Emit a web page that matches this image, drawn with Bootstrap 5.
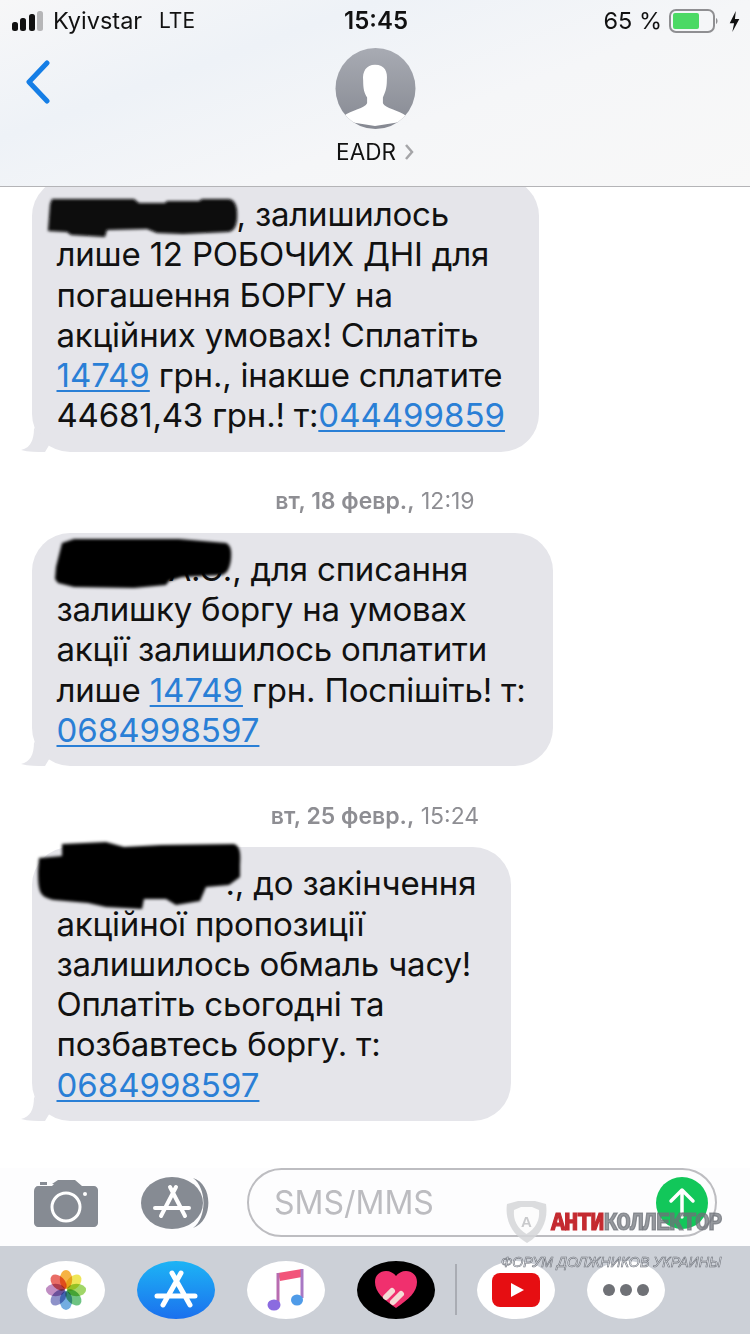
<!DOCTYPE html>
<html lang="uk">
  <head>
    <meta charset="UTF-8" />
    <meta name="viewport" content="width=device-width, initial-scale=1.0" />
    <title>EADR</title>
    <link href="https://cdn.jsdelivr.net/npm/bootstrap@5.3.0/dist/css/bootstrap.min.css" rel="stylesheet" />
    <style>
      html, body { margin: 0; background: #fff; }
      body { font-family: Inter, "Liberation Sans", sans-serif; color: #111; }
      .phone { width: 750px; height: 1334px; overflow: hidden; }
      .top-head {
        height: 187px; flex: none; border-bottom: 1px solid #b4b4b7;
        background: linear-gradient(160deg, #f7f7f8 0%, #eef2f7 30%, #f5f6f8 60%, #f8f8f8 100%);
      }
      .status-row { height: 42px; padding: 0 10px 0 12px; font-size: 23.5px; line-height: 42px; }
      .sig { gap: 2.4px; width: 31px; margin-right: 10px; height: 20px; }
      .sig i { display: block; width: 6px; background: #111; border-radius: 2.5px; }
      .sig i:nth-child(1) { height: 9px; }
      .sig i:nth-child(2) { height: 13px; }
      .sig i:nth-child(3) { height: 17px; }
      .sig i:nth-child(4) { height: 20px; background: #b6b6b8; }
      .carrier { width: 106px; }
      .net-type { font-size: 21px; }
      .clock { position: absolute; left: 344px; font-weight: 600; font-size: 24px; }
      .batt { margin: 0 11px 0 7px; }
      .nav-row { height: 144px; }
      .nav-side { width: 200px; padding: 18px 0 0 25px; flex: none; }
      .contact-name { font-size: 22.5px; line-height: 26px; margin-top: 10px; }
      .chat-area { flex: 1 1 auto; overflow: hidden; padding: 0 0 0 32px; min-height: 0; }
      .bubble {
        position: relative; background: #e5e5ea; border-radius: 38px; padding: 16px 0 16px 24.5px;
        font-size: 33px; line-height: 40.3px; color: #111; letter-spacing: -0.2px; white-space: nowrap;
      }
      .bubble a { color: #2a7fd6; letter-spacing: 0; text-decoration: underline; text-decoration-thickness: 2px; text-underline-offset: 3px; }
      .bw-one { width: 507px; margin-top: -9px; }
      .bw-two { width: 521px; }
      .bw-three { width: 479px; }
      .tail { position: absolute; left: -11px; bottom: 0; }
      .blob { position: absolute; pointer-events: none; overflow: visible; }
      .hidden-name { display: inline-block; }
      .stamp {
        height: 28px; line-height: 28px; margin: 35.5px 0 17.5px -32px; text-align: center;
        font-size: 23px; color: #8e8e93; font-weight: 400;
      }
      .stamp b { font-weight: 600; }
      .compose { height: 78px; flex: none; padding: 0 33px 9px 34px; background: #fdfdfe; }
      .round-app { margin: 0 0 0 43px; }
      .sms-box {
        width: 470px; height: 69px; margin-left: 36px; border: 2px solid #bdbdc1; border-radius: 35px;
        padding: 0 7px 0 25px; font-size: 32px; color: #bcbcc0;
      }
      .send { width: 52px; height: 52px; }
      .dock { height: 88px; flex: none; background: #ccd0d7; padding: 15px 0 0 27px; gap: 32px; }
      .dock-item { width: 78px; height: 58px; border-radius: 50%; background: #fff; flex: none; }
      .dock-item.is-blue { background: linear-gradient(#1db4f5, #1b70ee); }
      .dock-item.is-black { background: #000; }
      .dock-line { width: 2px; height: 51px; background: #a9acb3; margin: 3px -12px 0 -12px; flex: none; }
      .petals ellipse { mix-blend-mode: multiply; }
      .wm-mark { position: absolute; left: 501px; top: 1200px; width: 225px; height: 70px; pointer-events: none; }
      .wm-shield { position: absolute; left: 3px; top: 0; }
      .wm-title {
        position: absolute; left: 50px; top: 12px; font: 700 25px/24px "Liberation Mono", monospace;
        letter-spacing: -1.2px; white-space: nowrap; transform: scaleX(0.95); transform-origin: left;
        -webkit-text-stroke: 1.2px currentColor;
      }
      .wm-red { color: #c42a30; }
      .wm-gray { color: rgba(110, 113, 120, .72); }
      .wm-sub {
        position: absolute; left: 0; top: 54px; font: italic 400 14.2px/16px "Liberation Sans", sans-serif;
        white-space: nowrap; color: rgba(235, 238, 242, .8); -webkit-text-stroke: .6px #6d7179;
      }
    </style>
  </head>
  <body>
    <div class="phone position-relative d-flex flex-column">
      <!-- top bar -->
      <div class="top-head">
        <div class="status-row d-flex align-items-center position-relative">
          <div class="sig d-flex align-items-end"><i></i><i></i><i></i><i></i></div>
          <span class="carrier">Kyivstar</span>
          <span class="net-type">LTE</span>
          <span class="clock">15:45</span>
          <span class="ms-auto">65 %</span>
          <svg class="batt" width="49" height="24" viewBox="0 0 49 24">
            <rect x="1" y="1" width="44" height="22" rx="6" fill="none" stroke="#8f8f92" stroke-width="2" />
            <rect x="4" y="4" width="26" height="16" rx="2" fill="#4cd964" />
            <path d="M47 9 C49 10 49 14 47 15 Z" fill="#8f8f92" />
          </svg>
          <svg width="11" height="21" viewBox="0 0 11 24"><path d="M7 0 L0 14 H5 L3 24 L11 9 H6 Z" fill="#111" /></svg>
        </div>
        <div class="nav-row d-flex">
          <div class="nav-side">
            <svg width="26" height="44" viewBox="0 0 26 44"><path d="M22 3 L4 22 L22 41" fill="none" stroke="#157ee6" stroke-width="5" stroke-linecap="round" stroke-linejoin="round" /></svg>
          </div>
          <div class="flex-grow-1 d-flex flex-column align-items-center">
            <svg style="margin-top: 6px" width="81" height="81" viewBox="0 0 81 82">
              <defs><linearGradient id="av" x1="0" y1="0" x2="0" y2="1"><stop offset="0" stop-color="#a8abb3" /><stop offset="1" stop-color="#868992" /></linearGradient><clipPath id="avc"><ellipse cx="40.5" cy="41" rx="40.5" ry="41" /></clipPath></defs>
              <ellipse cx="40.5" cy="41" rx="40.5" ry="41" fill="url(#av)" />
              <path clip-path="url(#avc)" d="M40 17 C50 17 53 24 52 33 C52 41 50 46 48 50 L48 56 C50 61 64 63 72 69 L72 74 L40 79 L8 74 L8 69 C16 63 30 61 32 56 L32 50 C29 46 28 41 28 33 C27 24 31 17 40 17 Z" fill="#fff" />
            </svg>
            <div class="contact-name d-flex align-items-center gap-2">EADR
              <svg width="10" height="18" viewBox="0 0 10 18"><path d="M2 2 L8 9 L2 16" fill="none" stroke="#a5a5a8" stroke-width="2.5" /></svg>
            </div>
          </div>
          <div class="nav-side"></div>
        </div>
      </div>

      <!-- messages -->
      <div class="chat-area">
        <div class="bubble bw-one">
          <span class="hidden-name" style="width: 180px"></span>, залишилось<br />
          лише 12 РОБОЧИХ ДНІ для<br />
          погашення БОРГУ на<br />
          акційних умовах! Сплатіть<br />
          <a href="#">14749</a> грн., інакше сплатите<br />
          44681,43 грн.! т:<a href="#">044499859</a>
          <svg class="tail" width="30" height="30" viewBox="0 0 30 30"><path d="M0 28 C9 26 13 19 13 6 L30 20 L24 30 C15 30 8 30 0 28 Z" fill="#e5e5ea" /></svg>
          <svg class="blob" style="left: 15px; top: 18px" width="192" height="44" viewBox="0 0 192 44">
            <defs><filter id="bl"><feGaussianBlur stdDeviation="1.6" /></filter></defs>
            <path filter="url(#bl)" d="M3 8 L5 3 H87 L92 7 H118 L120 5 H152 L155 3 H182 C189 4 191 12 190 24 C189 32 186 36 180 36 L136 38 L110 37 L100 33 L60 34 L58 41 L24 39 L20 36 L1 35 Z" fill="#070707" />
          </svg>
        </div>

        <div class="stamp"><b>вт, 18 февр.,</b> 12:19</div>

        <div class="bubble bw-two">
          <span class="hidden-name" style="width: 112px"></span>А.С., для списання<br />
          залишку боргу на умовах<br />
          акції залишилось оплатити<br />
          лише <a href="#">14749</a> грн. Поспішіть! т:<br />
          <a href="#">0684998597</a>
          <svg class="tail" width="30" height="30" viewBox="0 0 30 30"><path d="M0 28 C9 26 13 19 13 6 L30 20 L24 30 C15 30 8 30 0 28 Z" fill="#e5e5ea" /></svg>
          <svg class="blob" style="left: 22px; top: 4px" width="210" height="68" viewBox="0 0 210 68">
            <path filter="url(#bl)" d="M8 6 L20 2 H125 L172 6 C176 8 178 12 177 22 C176 30 174 36 168 38 L128 40 L115 44 L112 48 L80 51 L20 50 L4 46 L1 42 L2 30 Z" fill="#050505" />
          </svg>
        </div>

        <div class="stamp"><b>вт, 25 февр.,</b> 15:24</div>

        <div class="bubble bw-three">
          <span class="hidden-name" style="width: 169px"></span>., до закінчення<br />
          акційної пропозиції<br />
          залишилось обмаль часу!<br />
          Оплатіть сьогодні та<br />
          позбавтесь боргу. т:<br />
          <a href="#">0684998597</a>
          <svg class="tail" width="30" height="30" viewBox="0 0 30 30"><path d="M0 28 C9 26 13 19 13 6 L30 20 L24 30 C15 30 8 30 0 28 Z" fill="#e5e5ea" /></svg>
          <svg class="blob" style="left: 4px; top: -6px" width="210" height="76" viewBox="0 0 210 76">
            <path filter="url(#bl)" d="M26 3 L70 1 L88 6 L125 4 L198 3 C204 5 205 12 204 24 L204 36 L193 44 L170 46 L164 60 L140 64 L130 58 L108 58 L106 68 L70 66 L52 62 L18 59 C4 56 2 52 2 30 L3 17 L26 15 Z" fill="#030303" />
          </svg>
        </div>
      </div>

      <!-- compose row -->
      <div class="compose d-flex align-items-center">
        <svg width="64" height="48" viewBox="0 0 64 48">
          <path d="M20 5 H18 L24 1 H41 L48 7 H60 C62 7 64 9 64 11 V44 C64 46 62 48 60 48 H4 C2 48 0 46 0 44 V12 C0 9 2 7 4 7 H18 Z" fill="#868b93" />
          <rect x="6" y="3" width="7" height="3" fill="#868b93" />
          <circle cx="32" cy="28" r="14" fill="none" stroke="#fff" stroke-width="3" />
          <circle cx="51" cy="15" r="2" fill="#fff" />
        </svg>
        <svg class="round-app" width="70" height="54" viewBox="0 0 70 54">
          <ellipse cx="31" cy="27" rx="31" ry="26" fill="#868b93" />
          <path d="M52 2 C72 8 73 44 52 52 C66 42 66 12 52 2 Z" fill="#868b93" />
          <path d="M29 11 L44 40 M35 11 L20 40 M14 32 H48" stroke="#fff" stroke-width="4" stroke-linecap="round" fill="none" />
        </svg>
        <div class="sms-box d-flex align-items-center justify-content-between">
          <span>SMS/MMS</span>
          <svg class="send" viewBox="0 0 52 52">
            <circle cx="26" cy="26" r="26" fill="#12c75a" />
            <path d="M26 40 V13 M15 24 L26 13 L37 24" fill="none" stroke="#fff" stroke-width="3.5" stroke-linecap="round" stroke-linejoin="round" />
          </svg>
        </div>
      </div>

      <!-- app strip -->
      <div class="dock d-flex align-items-start">
        <div class="dock-item d-flex align-items-center justify-content-center">
          <svg width="42" height="42" viewBox="0 0 44 44">
            <g class="petals" fill-opacity=".85">
              <ellipse cx="22" cy="11" rx="6.5" ry="10" fill="#f5a623" />
              <ellipse cx="22" cy="11" rx="6.5" ry="10" fill="#ece23a" transform="rotate(45 22 22)" />
              <ellipse cx="22" cy="11" rx="6.5" ry="10" fill="#8fcf4e" transform="rotate(90 22 22)" />
              <ellipse cx="22" cy="11" rx="6.5" ry="10" fill="#55b86c" transform="rotate(135 22 22)" />
              <ellipse cx="22" cy="11" rx="6.5" ry="10" fill="#5a9fdc" transform="rotate(180 22 22)" />
              <ellipse cx="22" cy="11" rx="6.5" ry="10" fill="#7a7fc0" transform="rotate(225 22 22)" />
              <ellipse cx="22" cy="11" rx="6.5" ry="10" fill="#b57ab8" transform="rotate(270 22 22)" />
              <ellipse cx="22" cy="11" rx="6.5" ry="10" fill="#e5534b" transform="rotate(315 22 22)" />
            </g>
          </svg>
        </div>
        <div class="dock-item is-blue d-flex align-items-center justify-content-center">
          <svg width="44" height="40" viewBox="0 0 44 40"><path d="M18 3 L36 35 M27 3 L9 35 M3 26 H41" stroke="#fff" stroke-width="5" stroke-linecap="round" fill="none" /></svg>
        </div>
        <div class="dock-item d-flex align-items-center justify-content-center">
          <svg width="38" height="44" viewBox="0 0 38 44">
            <defs><linearGradient id="mu" x1="0" y1="0" x2="0" y2="1"><stop offset="0" stop-color="#f2557a" /><stop offset="1" stop-color="#5c8fe0" /></linearGradient></defs>
            <path d="M11 5 L35 1 V9 L13 13 Z" fill="#f2557a" />
            <path d="M11 5 V36" stroke="#b86cb0" stroke-width="3" fill="none" />
            <path d="M35 1 V30" stroke="#a878c4" stroke-width="3" fill="none" />
            <ellipse cx="7" cy="37" rx="6.5" ry="5.5" fill="#8b6be0" />
            <ellipse cx="30" cy="32" rx="6" ry="5.5" fill="#4f9be8" />
          </svg>
        </div>
        <div class="dock-item is-black d-flex align-items-center justify-content-center">
          <svg width="42" height="38" viewBox="0 0 42 38">
            <path d="M21 37 C8 28 0 21 0 11 C0 4 5 0 11 0 C15 0 19 2 21 5 C23 2 27 0 31 0 C37 0 42 4 42 11 C42 21 34 28 21 37 Z" fill="#f0306e" />
            <path d="M11 26 L17 20 M18 31 L26 23" stroke="#f4dcd6" stroke-width="6" stroke-linecap="round" />
          </svg>
        </div>
        <div class="dock-line"></div>
        <div class="dock-item d-flex align-items-center justify-content-center">
          <svg width="48" height="34" viewBox="0 0 48 34">
            <rect width="48" height="34" rx="8" fill="#e60e12" />
            <path d="M19 10 L32 17 L19 24 Z" fill="#fff" />
          </svg>
        </div>
        <div class="dock-item d-flex align-items-center justify-content-center gap-1">
          <svg width="46" height="12" viewBox="0 0 46 12"><circle cx="6" cy="6" r="6" fill="#6f7176" /><circle cx="23" cy="6" r="6" fill="#6f7176" /><circle cx="40" cy="6" r="6" fill="#6f7176" /></svg>
        </div>
      </div>

      <!-- watermark lies over the bottom of the screen -->
      <div class="wm-mark">
        <svg class="wm-shield" width="45" height="44" viewBox="0 0 45 44">
          <path d="M3 4 L14 1 H31 L42 4 C44 18 40 33 23 43 C6 33 1 18 3 4 Z" fill="#d5d6d8" fill-opacity=".85" />
          <path d="M10 10 L17 7 H28 L35 10 C36 20 32 28 22.500 34 C13 28 9 20 10 10 Z" fill="#fff" fill-opacity=".9" />
          <text x="22.500" y="27" text-anchor="middle" font-family="Liberation Sans, sans-serif" font-size="15" font-weight="700" fill="#c9cacc">А</text>
        </svg>
        <div class="wm-title"><span class="wm-red">АНТИ</span><span class="wm-gray">КОЛЛЕКТОР</span></div>
        <div class="wm-sub">ФОРУМ ДОЛЖНИКОВ УКРАИНЫ</div>
      </div>
    </div>
    <script src="https://cdn.jsdelivr.net/npm/bootstrap@5.3.0/dist/js/bootstrap.bundle.min.js"></script>
  </body>
</html>
